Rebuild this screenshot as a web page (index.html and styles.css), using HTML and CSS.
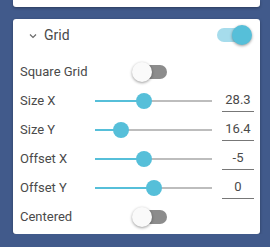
FILE: index.html
```html
<!DOCTYPE html>
<html lang="en">
<head>
    <meta charset="UTF-8">
    <meta name="viewport" content="width=device-width, initial-scale=1.0">
    <title>Grid Settings</title>
    <link rel="stylesheet" href="styles.css">
</head>
<body>

    <div class="card card-top"></div>

    <div class="card">
        <div class="card-header">
            <svg class="chevron" width="8" height="6" viewBox="0 0 8 6">
                <polyline points="1,1.5 4,4.5 7,1.5" fill="none" stroke="#6a6a6a" stroke-width="1.2"/>
            </svg>
            <span class="card-title">Grid</span>
            <div class="switch on"><div class="dot"></div></div>
        </div>

        <div class="rows">
            <div class="row">
                <label>Square Grid</label>
                <div class="cell-switch"><div class="switch"><div class="dot"></div></div></div>
            </div>
            <div class="row">
                <label>Size X</label>
                <div class="slider"><div class="fill" style="width: 41.9%"></div><div class="knob" style="left: 41.9%"></div></div>
                <input class="value" type="text" value="28.3">
            </div>
            <div class="row">
                <label>Size Y</label>
                <div class="slider"><div class="fill" style="width: 21.8%"></div><div class="knob" style="left: 21.8%"></div></div>
                <input class="value" type="text" value="16.4">
            </div>
            <div class="row">
                <label>Offset X</label>
                <div class="slider"><div class="fill" style="width: 41.9%"></div><div class="knob" style="left: 41.9%"></div></div>
                <input class="value" type="text" value="-5">
            </div>
            <div class="row">
                <label>Offset Y</label>
                <div class="slider"><div class="fill" style="width: 50.4%"></div><div class="knob" style="left: 50.4%"></div></div>
                <input class="value" type="text" value="0">
            </div>
            <div class="row">
                <label>Centered</label>
                <div class="cell-switch"><div class="switch"><div class="dot"></div></div></div>
            </div>
        </div>
    </div>

</body>
</html>
```

FILE: styles.css
```css
body {
    font-family: Roboto, "Liberation Sans", sans-serif;
    margin: 0;
    padding: 0 10px 0 13px;
    background-color: #415a8b;
    color: #4a4a4a;
}
.card {
    width: 247px;
    background-color: #fff;
    border-radius: 3px;
    box-shadow: 0 1px 3px rgba(0, 0, 0, 0.35);
    margin-top: 12px;
    padding-bottom: 3px;
}
.card-top {
    height: 7px;
    margin-top: 0;
    padding-bottom: 0;
    border-radius: 0 0 3px 3px;
}
.card-header {
    height: 32px;
    display: flex;
    align-items: center;
    padding: 0 9px 0 16px;
}
.chevron {
    display: block;
    margin-right: 7px;
    margin-top: 1px;
}
.card-title {
    font-size: 14px;
    flex: 1;
}
.rows {
    padding: 6px 6px 0 7px;
}
.row {
    display: grid;
    grid-template-columns: 75px 117px 42px;
    align-items: center;
    height: 29px;
}
.row label {
    font-size: 13px;
}
.cell-switch {
    padding-left: 38px;
}
.switch {
    position: relative;
    width: 34px;
    height: 14px;
    border-radius: 7px;
    background-color: #8c8c8c;
}
.switch .dot {
    position: absolute;
    top: -3px;
    left: -1px;
    width: 20px;
    height: 20px;
    border-radius: 50%;
    background-color: #fafafa;
    box-shadow: 0 1px 3px rgba(0, 0, 0, 0.4);
}
.switch.on {
    background-color: #a6dcec;
}
.switch.on .dot {
    left: auto;
    right: -1px;
    background-color: #56bfd9;
}
.slider {
    position: relative;
    height: 2px;
    background-color: #bdbdbd;
}
.slider .fill {
    height: 100%;
    background-color: #56bfd9;
}
.slider .knob {
    position: absolute;
    top: 50%;
    width: 16px;
    height: 16px;
    border-radius: 50%;
    background-color: #56bfd9;
    transform: translate(-50%, -50%);
}
.value {
    justify-self: end;
    width: 32px;
    height: 22px;
    box-sizing: border-box;
    padding: 0 0 2px 0;
    margin: 0;
    border: none;
    border-bottom: 1px solid #777;
    background: transparent;
    font-family: Roboto, "Liberation Sans", sans-serif;
    font-size: 13px;
    color: #4a4a4a;
    text-align: center;
    outline: none;
}
```
